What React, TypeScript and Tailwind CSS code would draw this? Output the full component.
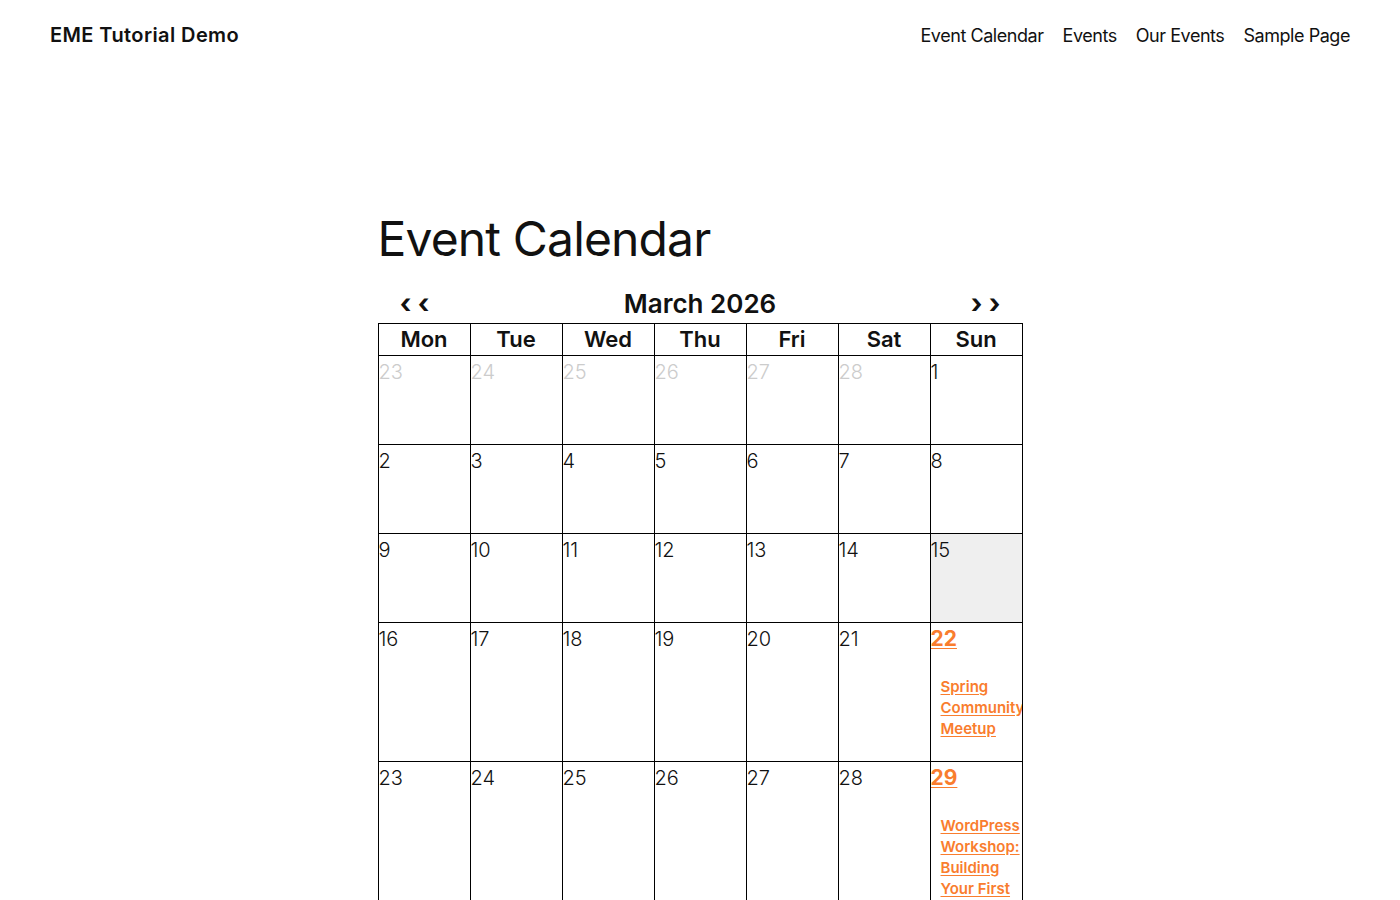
import React from "react";

type Day = {
  num: number;
  muted?: boolean;
  today?: boolean;
  events?: string[];
};

const weeks: Day[][] = [
  [
    { num: 23, muted: true },
    { num: 24, muted: true },
    { num: 25, muted: true },
    { num: 26, muted: true },
    { num: 27, muted: true },
    { num: 28, muted: true },
    { num: 1 },
  ],
  [2, 3, 4, 5, 6, 7, 8].map((n) => ({ num: n })),
  [9, 10, 11, 12, 13, 14].map((n) => ({ num: n } as Day)).concat([{ num: 15, today: true }]),
  [16, 17, 18, 19, 20, 21]
    .map((n) => ({ num: n } as Day))
    .concat([{ num: 22, events: ["Spring Community Meetup"] }]),
  [23, 24, 25, 26, 27, 28]
    .map((n) => ({ num: n } as Day))
    .concat([{ num: 29, events: ["WordPress Workshop: Building Your First Website"] }]),
];

const dayNames = ["Mon", "Tue", "Wed", "Thu", "Fri", "Sat", "Sun"];
const navLinks = ["Event Calendar", "Events", "Our Events", "Sample Page"];

function DayCell({ day }: { day: Day }) {
  return (
    <td
      className={`border border-black align-top p-0 ${day.today ? "bg-[#efefef]" : "bg-white"}`}
    >
      <div className="overflow-hidden h-full">
        {day.events ? (
          <a
            href="#"
            className="block pt-[2px] text-[21px] leading-7 font-bold text-[#f97d2e]"
          >
            <span className="underline underline-offset-2 decoration-1">{day.num}</span>
          </a>
        ) : (
          <div
            className={`pt-[2px] text-[20px] leading-7 font-light ${day.muted ? "text-[#cccccc]" : "text-[#111111]"}`}
          >
            {day.num}
          </div>
        )}
        {day.events && (
          <ul className="mt-[23px] pl-[10px]">
            {day.events.map((ev) => (
              <li key={ev} className="text-[15px] leading-[21px]">
                <a
                  href="#"
                  className="font-semibold text-[#f97d2e] underline underline-offset-2"
                >
                  {ev}
                </a>
              </li>
            ))}
          </ul>
        )}
      </div>
    </td>
  );
}

export default function App() {
  return (
    <div className="min-h-screen bg-white text-[#111111] font-['Inter','Noto_Sans',sans-serif]">
      <header className="flex items-center justify-between h-[70px] px-[50px]">
        <a href="#" className="text-[20px] font-semibold tracking-[0.4px]">
          EME Tutorial Demo
        </a>
        <nav className="flex items-center gap-[19px] text-[18px] tracking-[-0.45px]">
          {navLinks.map((l) => (
            <a key={l} href="#">
              {l}
            </a>
          ))}
        </nav>
      </header>

      <main className="w-[645px] mx-auto pt-[140px]">
        <h1 className="text-[48px] leading-[1.2] font-normal tracking-[-0.85px]">Event Calendar</h1>

        <div className="mt-[17px] h-[38px] flex items-center justify-between px-[20px] text-[26px] leading-[38px] font-semibold">
          <a href="#" className="w-[34px] text-center text-[27px] font-bold">
            ‹ ‹
          </a>
          <span>March 2026</span>
          <a href="#" className="w-[34px] text-center text-[27px] font-bold">
            › ›
          </a>
        </div>

        <table className="w-[645px] table-fixed border-collapse">
          <thead>
            <tr className="h-[32px]">
              {dayNames.map((d) => (
                <th
                  key={d}
                  className="border border-black p-0 text-[22px] leading-[30px] font-semibold text-center"
                >
                  {d}
                </th>
              ))}
            </tr>
          </thead>
          <tbody>
            {weeks.map((week, i) => (
              <tr key={i} className={i === 3 ? "h-[139px]" : i === 4 ? "h-[180px]" : "h-[89px]"}>
                {week.map((day, j) => (
                  <DayCell key={j} day={day} />
                ))}
              </tr>
            ))}
          </tbody>
        </table>
      </main>
    </div>
  );
}
